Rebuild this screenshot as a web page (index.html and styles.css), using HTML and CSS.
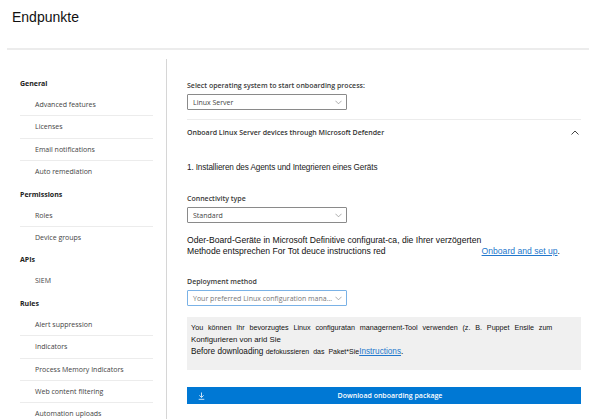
FILE: index.html
```html
<!DOCTYPE html>
<html lang="de">
<head>
<meta charset="utf-8">
<link rel="stylesheet" href="styles.css">
</head>
<body>
<header class="top">
  <h1 class="title">Endpunkte</h1>
</header>
<div class="main">
  <nav class="side">
    <div class="grp">General</div>
    <div class="item">Advanced features</div>
    <div class="item">Licenses</div>
    <div class="item">Email notifications</div>
    <div class="item">Auto remediation</div>
    <div class="grp">Permissions</div>
    <div class="item">Roles</div>
    <div class="item">Device groups</div>
    <div class="grp">APIs</div>
    <div class="item">SIEM</div>
    <div class="grp">Rules</div>
    <div class="item">Alert suppression</div>
    <div class="item">Indicators</div>
    <div class="item">Process Memory Indicators</div>
    <div class="item">Web content filtering</div>
    <div class="item">Automation uploads</div>
  </nav>
  <section class="content">
    <div class="label first">Select operating system to start onboarding process:</div>
    <div class="select"><span>Linux Server</span><svg class="chev" viewBox="0 0 8 5"><path d="M0.5 0.5 L4 4 L7.5 0.5" fill="none" stroke="#8a8a8a" stroke-width="0.8"/></svg></div>
    <div class="acc">
      <span>Onboard Linux Server devices through Microsoft Defender</span>
      <svg class="up" viewBox="0 0 8 5"><path d="M0.5 4.5 L4 1 L7.5 4.5" fill="none" stroke="#444" stroke-width="1"/></svg>
    </div>
    <div class="step">1. Installieren des Agents und Integrieren eines Geräts</div>
    <div class="label">Connectivity type</div>
    <div class="select"><span>Standard</span><svg class="chev" viewBox="0 0 8 5"><path d="M0.5 0.5 L4 4 L7.5 0.5" fill="none" stroke="#8a8a8a" stroke-width="0.8"/></svg></div>
    <div class="para">
      <div>Oder-Board-Geräte in Microsoft Definitive configurat-ca, die Ihrer verzögerten</div>
      <div>Methode entsprechen For Tot deuce instructions red<a class="link setup" href="#">Onboard and set up</a>.</div>
    </div>
    <div class="label deploy">Deployment method</div>
    <div class="select focus"><span class="ph">Your preferred Linux configuration mana...</span><svg class="chev" viewBox="0 0 8 5"><path d="M0.5 0.5 L4 4 L7.5 0.5" fill="none" stroke="#8a8a8a" stroke-width="0.8"/></svg></div>
    <div class="info">
      <div class="l1">You können Ihr bevorzugtes Linux configuratan managernent-Tool verwenden (z. B. Puppet Ensile zum</div>
      <div>Konfigurieren von arid Sie</div>
      <div class="l3">Before downloading <span class="sm">defokussieren das Paket*Sie</span><a class="link" href="#">Instructions</a>.</div>
    </div>
    <button class="dl">
      <svg class="dli" viewBox="0 0 8 9"><path d="M4 0.5 V6 M1.5 3.8 L4 6.2 L6.5 3.8 M0.8 8.3 H7.2" fill="none" stroke="#fff" stroke-width="0.9"/></svg>
      <span>Download onboarding package</span>
    </button>
  </section>
</div>
</body>
</html>
```
FILE: styles.css
```css
* { box-sizing: border-box; }
html, body { margin: 0; padding: 0; background: #fff; }
body {
  font-family: "Open Sans", "Noto Sans", sans-serif;
  color: #333;
  width: 589px;
  height: 419px;
  overflow: hidden;
}
.top {
  height: 50px;
  margin-left: 7px;
  border-bottom: 2px solid #ececec;
}
.title {
  margin: 0;
  padding: 9px 0 0 5px;
  font-family: "Liberation Sans", Arial, sans-serif;
  font-weight: normal;
  font-size: 14px;
  line-height: 16px;
  color: #111;
}
.main {
  display: flex;
  margin-top: 9px;
}
.side {
  width: 167px;
  flex: none;
  padding: 14px 13px 0 20px;
  border-right: 1px solid #d6d6d6;
  height: 360px;
}
.grp {
  height: 21px;
  line-height: 21px;
  font-size: 7px;
  font-weight: 700;
  color: #222;
}
.item {
  height: 22.4px;
  line-height: 21.4px;
  font-size: 7px;
  color: #444;
  padding-left: 15px;
  border-bottom: 1px solid #ececec;
}
.item:has(+ .grp) { border-bottom: none; }
.content {
  flex: 1;
  padding: 20px 8px 0 20px;
}
.label {
  font-size: 7px;
  font-weight: 600;
  color: #3a3a3a;
  line-height: 10px;
  margin-top: 13px;
}
.label.first { margin-top: 2px; }
.label.deploy { margin-top: 20px; }
.select {
  width: 160px;
  height: 16px;
  margin-top: 3px;
  border: 1px solid #8a8a8a;
  border-radius: 1px;
  display: flex;
  align-items: center;
  justify-content: space-between;
  padding: 0 4px 0 5px;
  font-size: 7px;
  color: #444;
}
.select.focus { border-color: #7ab2e6; }
.select .ph { color: #777; }
.chev { width: 7px; height: 5px; }
.acc {
  margin-top: 9px;
  border-top: 1px solid #ececec;
  height: 25px;
  display: flex;
  align-items: center;
  justify-content: space-between;
  font-size: 7px;
  font-weight: 600;
  color: #333;
  padding-right: 2px;
}
.up { width: 8px; height: 5px; }
.step {
  margin-top: 19px;
  font-family: "Liberation Sans", Arial, sans-serif;
  font-size: 8.2px;
  letter-spacing: -0.13px;
  color: #222;
  line-height: 10px;
  margin-bottom: 21px;
}
.para {
  margin-top: 12px;
  font-family: "Liberation Sans", Arial, sans-serif;
  font-size: 8.6px;
  color: #111;
  line-height: 11px;
}
.link { color: #2277cc; text-decoration: underline; }
.setup { margin-left: 96px; }
.info {
  margin-top: 11px;
  background: #f0f0f0;
  height: 53px;
  padding: 5px 4px 0 4px;
  font-family: "Liberation Sans", Arial, sans-serif;
  font-size: 7.8px;
  line-height: 12px;
  color: #111;
}
.info .l1 { word-spacing: 2.8px; font-size: 7.2px; }
.info .l3 { font-size: 8.2px; }
.info .sm { font-size: 7px; word-spacing: 2px; }
.dl {
  margin-top: 17px;
  width: 100%;
  height: 17px;
  background: #0078d4;
  border: none;
  border-radius: 0;
  color: #fff;
  display: flex;
  align-items: center;
  padding: 0 0 0 11px;
  font-family: "Open Sans", sans-serif;
  font-size: 7px;
  font-weight: 600;
}
.dli { width: 7px; height: 8px; flex: none; }
.dl span { flex: 1; text-align: center; padding-right: 6px; }
```
